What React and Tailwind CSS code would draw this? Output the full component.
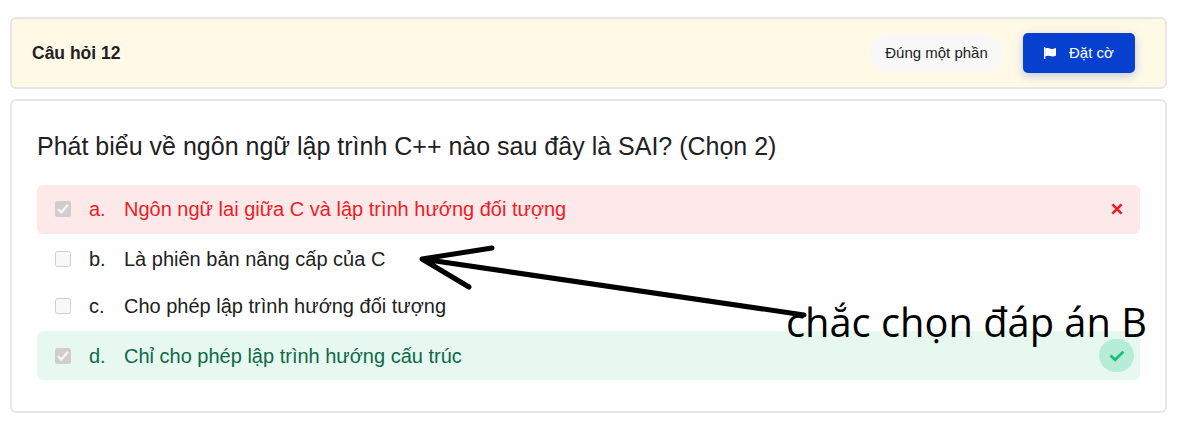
import React from "react";

const sans = "font-['Liberation_Sans',Arial,sans-serif]";

function FlagIcon() {
  return (
    <svg viewBox="0 0 12 12" className="size-3 shrink-0" fill="#fff">
      <path d="M0 0H1.3V12H0Z" />
      <path d="M1.2 1.4C3 .7 4.6.8 6 1.4 8 2.2 10 2 12 1.1V8.6C10 9.6 8 9.7 6 9 4.4 8.5 3 8.5 1.2 9.3Z" />
    </svg>
  );
}

function CrossIcon() {
  return (
    <svg viewBox="0 0 12 12" className="size-3" fill="none" stroke="#ee1c24" strokeWidth="2.7">
      <path d="M1.4 1.4 10.6 10.6M10.6 1.4 1.4 10.6" />
    </svg>
  );
}

function CheckIcon() {
  return (
    <svg viewBox="0 0 16 12" className="h-3 w-4" fill="none" stroke="#13bf78" strokeWidth="2.7">
      <path d="M1.5 5.6 6.1 9.8 14.4 1.6" />
    </svg>
  );
}

function CheckBox({ checked }) {
  return checked ? (
    <span className="flex size-4 shrink-0 items-center justify-center rounded-[2.5px] bg-[#cfcdcd]">
      <svg viewBox="0 0 16 16" className="size-4" fill="none" stroke="#f6f4f4" strokeWidth="2.4">
        <path d="M3 8.2 6.3 11.5 12.9 3.8" />
      </svg>
    </span>
  ) : (
    <span className="size-4 shrink-0 rounded-[2.5px] border border-[#cfcfcf] bg-[#f8f8f8]" />
  );
}

const answers = [
  { key: "a.", text: "Ngôn ngữ lai giữa C và lập trình hướng đối tượng", checked: true, row: "h-[49px] pb-0.5 bg-[#fee9ea] text-[#ee1c24]", state: "wrong" },
  { key: "b.", text: "Là phiên bản nâng cấp của C", checked: false, row: "h-[49px] text-[#212121]" },
  { key: "c.", text: "Cho phép lập trình hướng đối tượng", checked: false, row: "h-[48px] pb-[3px] text-[#212121]" },
  { key: "d.", text: "Chỉ cho phép lập trình hướng cấu trúc", checked: true, row: "h-[49px] bg-[#e7f8f0] text-[#0f6848]", state: "right" },
];

function Answer({ item }) {
  return (
    <li className={"flex items-center rounded-[6px] pl-[18px] pr-1.5 text-[20px] leading-6 " + item.row}>
      <CheckBox checked={item.checked} />
      <span className="ml-[18px] w-[35px] shrink-0">{item.key}</span>
      <span className="whitespace-nowrap">{item.text}</span>
      {item.state === "wrong" && (
        <span className="ml-auto flex w-[35px] justify-center">
          <CrossIcon />
        </span>
      )}
      {item.state === "right" && (
        <span className="ml-auto flex h-[33px] w-[35px] items-center justify-center rounded-full bg-[#b7edd6]">
          <CheckIcon />
        </span>
      )}
    </li>
  );
}

export default function App() {
  return (
    <main className={"relative flex h-[430px] w-[1181px] flex-col gap-2.5 overflow-hidden bg-white pl-[10px] pr-[14px] pt-[17px] " + sans}>
      <header className="flex h-[72px] items-center rounded-[6px] border-2 border-[#e7e7e7] bg-[#fff9e6] pl-5 pr-[30px]">
        <h1 className="text-[17.5px] font-bold text-[#212121]">Câu hỏi 12</h1>
        <span className="ml-auto flex h-[38px] w-[133px] items-center justify-center rounded-full bg-[#f8f8f8] text-[15px] text-[#212121]">
          Đúng một phần
        </span>
        <button className="ml-5 flex h-10 w-[112px] items-center rounded-[5px] bg-[#0740cf] pl-[21px] text-[15px] text-white shadow-[0_3px_10px_rgba(7,64,207,0.25)]">
          <FlagIcon />
          <span className="ml-[13px] whitespace-nowrap">Đặt cờ</span>
        </button>
      </header>

      <section className="h-[314px] rounded-[6px] border-2 border-[#e7e7e7] bg-white pl-[25px] pr-[25px] pt-[30px]">
        <h2 className="h-[54px] whitespace-nowrap text-[25px] leading-[31px] text-[#212121]">
          Phát biểu về ngôn ngữ lập trình C++ nào sau đây là SAI? (Chọn 2)
        </h2>
        <ul className="flex flex-col">
          {answers.map((item) => (
            <Answer key={item.key} item={item} />
          ))}
        </ul>
      </section>

      <p className="absolute left-[786px] top-[294px] whitespace-nowrap font-['Open_Sans','Noto_Sans',sans-serif] text-[39.8px] leading-[56px] text-black">
        chắc chọn đáp án B
      </p>
      <svg className="absolute left-[410px] top-[235px]" width="410" height="95" fill="none" stroke="#000" strokeWidth="5" strokeLinecap="round" strokeLinejoin="round">
        <path d="M394 80 12 24M82 13 12 24 59 52" />
      </svg>
    </main>
  );
}
